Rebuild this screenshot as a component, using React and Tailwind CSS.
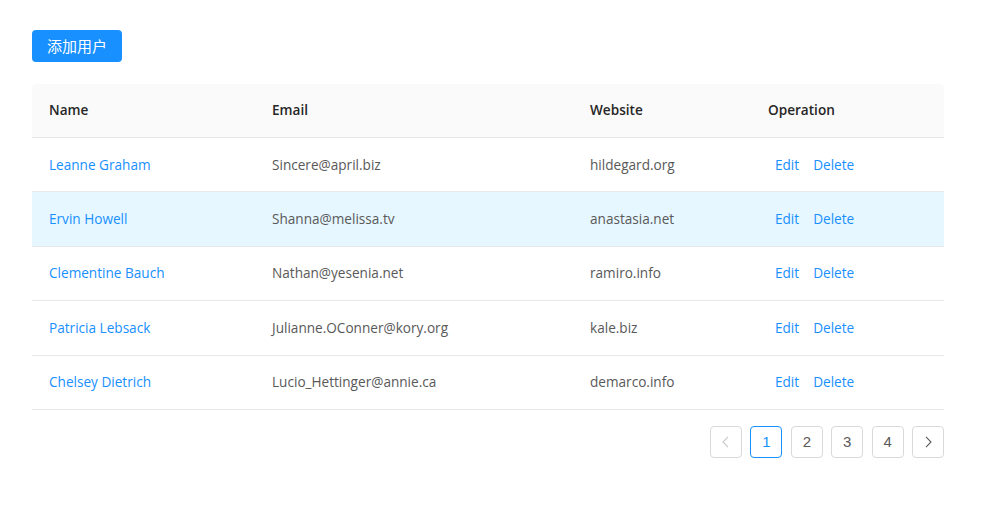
import React from 'react';

const users = [
  { name: 'Leanne Graham', email: 'Sincere@april.biz', website: 'hildegard.org' },
  { name: 'Ervin Howell', email: 'Shanna@melissa.tv', website: 'anastasia.net' },
  { name: 'Clementine Bauch', email: 'Nathan@yesenia.net', website: 'ramiro.info' },
  { name: 'Patricia Lebsack', email: 'Julianne.OConner@kory.org', website: 'kale.biz' },
  { name: 'Chelsey Dietrich', email: 'Lucio_Hettinger@annie.ca', website: 'demarco.info' },
];

export default function App() {
  return (
    <div
      className="min-h-screen bg-white px-8 pt-[30px] text-[13.6px] text-[#595959]"
      style={{ fontFamily: '"Open Sans", "Noto Sans CJK SC", sans-serif' }}
    >
      <button className="h-8 w-[90px] rounded bg-[#1890ff] text-[15px] leading-8 text-white">
        添加用户
      </button>

      <div className="mt-[22px] w-[912px]">
        {/* header */}
        <div className="flex h-[54px] items-center rounded-t bg-[#fafafa] border-b border-[#e8e8e8] font-semibold text-[#262626]">
          <div className="w-[224px] pl-[17px] pr-4">Name</div>
          <div className="w-[318px] px-4">Email</div>
          <div className="w-[178px] px-4">Website</div>
          <div className="w-[192px] px-4">Operation</div>
        </div>
        {users.map((u, i) => (
          <div
            key={u.name}
            className={`flex h-[54.4px] items-center border-b border-[#e8e8e8] ${i === 1 ? 'bg-[#e6f7ff]' : ''}`}
          >
            <div className="w-[224px] pl-[17px] pr-4 text-[#1890ff]">{u.name}</div>
            <div className="w-[318px] px-4">{u.email}</div>
            <div className="w-[178px] px-4">{u.website}</div>
            <div className="flex w-[192px] gap-[14px] px-4 pl-[23px] text-[#1890ff]">
              <span>Edit</span>
              <span>Delete</span>
            </div>
          </div>
        ))}

        {/* pagination */}
        <div className="mt-4 flex justify-end gap-[8.4px]">
          <div className="flex h-8 w-8 items-center justify-center rounded border border-[#d9d9d9] text-[#c8c8c8]">
            <svg width="12" height="12" viewBox="0 0 12 12" fill="none" stroke="currentColor" strokeWidth="1.1">
              <path d="M8 0.8 3 6l5 5.2" />
            </svg>
          </div>
          {[1, 2, 3, 4].map((n) => (
            <div
              key={n}
              className={`flex h-8 w-8 items-center justify-center rounded border text-[15px] ${
                n === 1 ? 'border-[#1890ff] text-[#1890ff]' : 'border-[#d9d9d9] text-[#595959]'
              }`}
              style={{ fontFamily: '"Liberation Sans", sans-serif' }}
            >
              {n}
            </div>
          ))}
          <div className="flex h-8 w-8 items-center justify-center rounded border border-[#d9d9d9] text-[#595959]">
            <svg width="12" height="12" viewBox="0 0 12 12" fill="none" stroke="currentColor" strokeWidth="1.1">
              <path d="M4 0.8 9 6l-5 5.2" />
            </svg>
          </div>
        </div>
      </div>
    </div>
  );
}
